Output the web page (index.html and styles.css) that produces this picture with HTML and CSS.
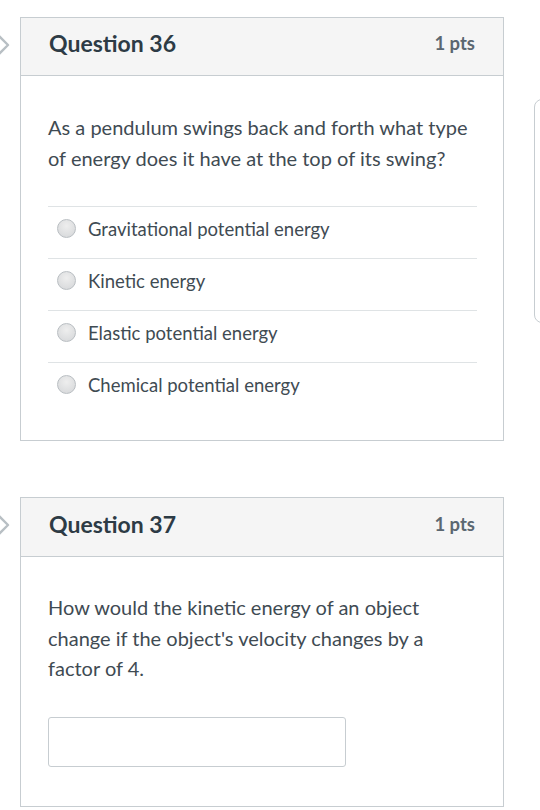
FILE: index.html
```html
<!DOCTYPE html>
<html>
<head>
<meta charset="utf-8">
<link rel="stylesheet" href="styles.css">
</head>
<body>
<div class="page">
  <div class="questions">
    <div class="card q36">
      <svg class="chev" width="12" height="26" viewBox="0 0 12 26"><path d="M-2 3 L8 13 L-2 23" fill="none" stroke="#b8bfc4" stroke-width="2.4" stroke-linejoin="round"/></svg>
      <div class="card-head">
        <span class="q-title">Question 36</span>
        <span class="q-pts">1 pts</span>
      </div>
      <div class="card-body">
        <p class="q-text">As a pendulum swings back and forth what type of energy does it have at the top of its swing?</p>
        <ul class="answers">
          <li class="answer"><span class="radio"></span><span>Gravitational potential energy</span></li>
          <li class="answer"><span class="radio"></span><span>Kinetic energy</span></li>
          <li class="answer"><span class="radio"></span><span>Elastic potential energy</span></li>
          <li class="answer"><span class="radio"></span><span>Chemical potential energy</span></li>
        </ul>
      </div>
    </div>
    <div class="card q37">
      <svg class="chev" width="12" height="26" viewBox="0 0 12 26"><path d="M-2 3 L8 13 L-2 23" fill="none" stroke="#b8bfc4" stroke-width="2.4" stroke-linejoin="round"/></svg>
      <div class="card-head">
        <span class="q-title">Question 37</span>
        <span class="q-pts">1 pts</span>
      </div>
      <div class="card-body body37">
        <p class="q-text">How would the kinetic energy of an object change if the object's velocity changes by a factor of 4.</p>
        <div class="input-box"></div>
      </div>
    </div>
  </div>
  <div class="sidebar"></div>
</div>
</body>
</html>
```
FILE: styles.css
```css
html, body {
  margin: 0;
  padding: 0;
  background: #ffffff;
}
body {
  font-family: Lato, "Open Sans", sans-serif;
  color: #2d3b45;
  width: 540px;
  height: 810px;
  overflow: hidden;
}
.page {
  display: flex;
  align-items: flex-start;
  padding-top: 17px;
}
.questions {
  margin-left: 20px;
  width: 484px;
  flex: none;
  display: flex;
  flex-direction: column;
  gap: 56px;
}
.card {
  position: relative;
  border: 1px solid #c7cdd1;
  background: #fff;
}
.chev {
  position: absolute;
  left: -21px;
  top: 14px;
}
.card-head {
  background: #f5f5f5;
  border-bottom: 1px solid #c7cdd1;
  height: 50px;
  padding: 0 28px 7px 28px;
  display: flex;
  align-items: center;
  justify-content: space-between;
}
.q37 .card-head {
  height: 51px;
}
.q-title {
  font-weight: 700;
  font-size: 23px;
  color: #2d3b45;
}
.q-pts {
  font-weight: 700;
  font-size: 18.5px;
  color: #5b6770;
}
.card-body {
  padding: 36px 26px 26px 27px;
}
.q-text {
  margin: 0;
  font-size: 20px;
  line-height: 30.5px;
  color: #3f4b53;
}
.answers {
  list-style: none;
  margin: 33px 0 0 0;
  padding: 0;
}
.answer {
  border-top: 1px solid #dfe3e5;
  height: 43px;
  padding: 0 0 8px 9px;
  display: flex;
  align-items: center;
  font-size: 18.5px;
  color: #3f4b53;
}
.radio {
  width: 17px;
  height: 17px;
  border-radius: 50%;
  border: 1px solid #b9bec2;
  background: radial-gradient(circle at 50% 35%, #eeeeee, #d4d6d8);
  margin-right: 12px;
  flex: none;
}
.body37 {
  padding-top: 35px;
  padding-bottom: 39px;
}
.input-box {
  margin-top: 33px;
  width: 296px;
  height: 48px;
  border: 1px solid #c7cdd1;
  border-radius: 3px;
  background: #fff;
}
.sidebar {
  margin-left: 30px;
  margin-top: 82px;
  width: 30px;
  height: 222px;
  border: 1px solid #c7cdd1;
  border-radius: 8px;
  flex: none;
}
```
